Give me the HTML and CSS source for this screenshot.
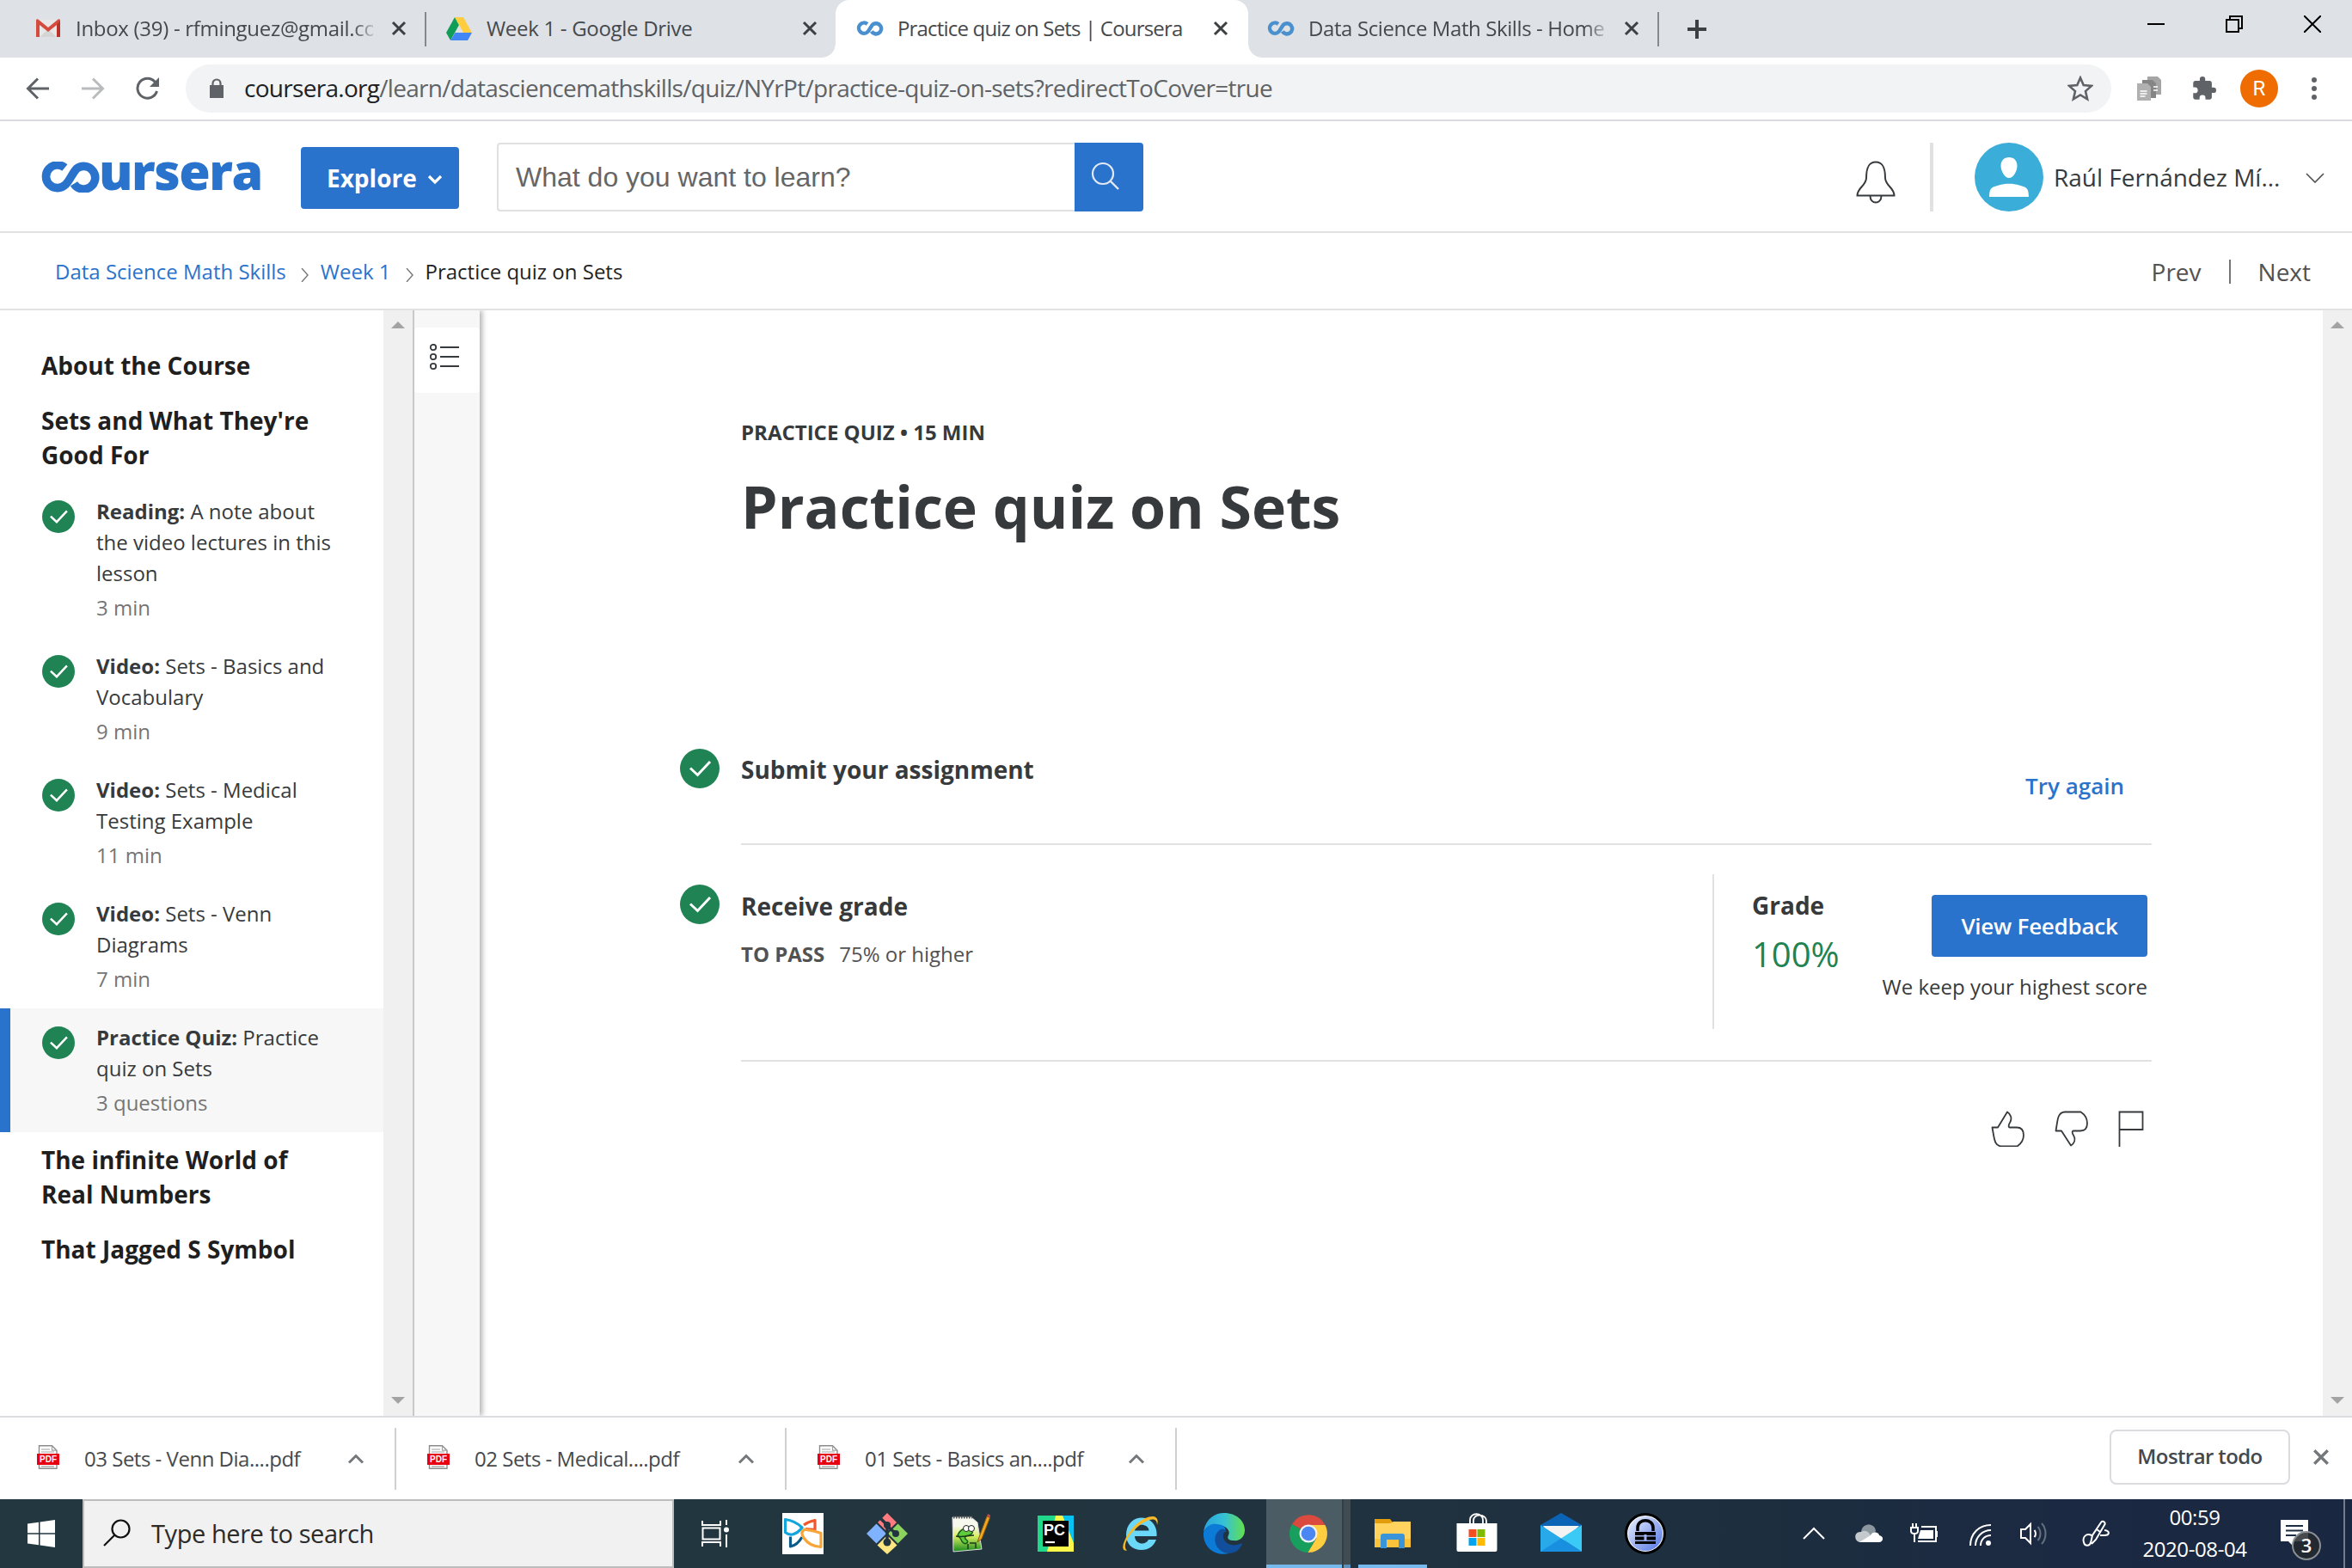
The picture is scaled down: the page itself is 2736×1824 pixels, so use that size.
FILE: index.html
```html
<!DOCTYPE html>
<html lang="en">
<head>
<meta charset="utf-8">
<title>Practice quiz on Sets | Coursera</title>
<link rel="stylesheet" href="styles.css">
</head>
<body>
<svg class="defs" width="0" height="0" aria-hidden="true">
  <defs>
    <symbol id="infinity" viewBox="24 114 210 108">
      <path d="M109 135A40 40 0 1 0 112 194C126 180 136 154 150 139A40 40 0 1 1 141 191" fill="none" stroke="currentColor" stroke-width="29"/>
    </symbol>
    <symbol id="close" viewBox="0 0 18 18"><path d="M2 2l14 14M16 2L2 16" stroke="currentColor" stroke-width="3" fill="none"/></symbol>
    <symbol id="check" viewBox="0 0 46 46"><circle cx="23" cy="23" r="23" fill="#1f8354"/><path d="M12 22.5l8.500 8L35 15" fill="none" stroke="#fff" stroke-width="3"/></symbol>
    <symbol id="pdf" viewBox="0 0 26 28">
      <path d="M2.500 .7h15l5.500 5.500v21.100h-20.500z" fill="#fff" stroke="#8c8c8c" stroke-width="1.400"/>
      <path d="M17.500 .7v5.500h5.500M5 5h10M5 8h15M5 24.800h15" fill="none" stroke="#a0a0a0" stroke-width="1.200"/>
      <rect y="10" width="26" height="13" fill="#e60012"/>
      <text x="13" y="20.300" class="pdf-label">PDF</text>
    </symbol>
    <symbol id="up" viewBox="0 0 20 12"><path d="M2 10.500l8-8 8 8" fill="none" stroke="#75787b" stroke-width="3"/></symbol>
  </defs>
</svg>

<header class="tabstrip">
  <div class="tabs">
    <div class="tab">
      <svg class="tab-icon" viewBox="0 0 32 32"><path d="M3 6h26v20H3z" fill="#e8e8e8"/><path d="M6 26l10-9 10 9z" fill="#d5d5d5"/><path d="M2 7v19h4V12l10 8 10-8v14h4V7c0-2-2-2-3-1L16 15 5 6C4 5 2 5 2 7z" fill="#d54b3d"/><path d="M26 12l4-5v19h-4z" fill="#b8332a"/></svg>
      <span class="tab-title fade">Inbox (39) - rfminguez@gmail.com</span>
      <svg class="tab-close"><use href="#close"/></svg>
    </div>
    <div class="tab">
      <svg class="tab-icon" viewBox="0 0 32 32"><path d="M11 3L1 21l5 9 10-18z" fill="#109d58"/><path d="M11 3h10l10 18H21z" fill="#ffcd40"/><path d="M11.500 21H31l-5 9H6z" fill="#4285f4"/></svg>
      <span class="tab-title">Week 1 - Google Drive</span>
      <svg class="tab-close"><use href="#close"/></svg>
    </div>
    <div class="tab active">
      <svg class="tab-icon mark"><use href="#infinity"/></svg>
      <span class="tab-title tight">Practice quiz on Sets | Coursera</span>
      <svg class="tab-close"><use href="#close"/></svg>
    </div>
    <div class="tab">
      <svg class="tab-icon mark"><use href="#infinity"/></svg>
      <span class="tab-title home-title fade">Data Science Math Skills - Home</span>
      <svg class="tab-close"><use href="#close"/></svg>
    </div>
    <svg class="new-tab" viewBox="0 0 24 24"><path d="M12 1v22M1 12h22" stroke="#3c4043" stroke-width="4"/></svg>
  </div>
  <div class="window-controls">
    <svg viewBox="0 0 20 20"><path d="M0 10h20" stroke="#000" stroke-width="2"/></svg>
    <svg viewBox="0 0 20 20"><path d="M1 5h14v14H1zM5 5V1h14v14h-4" fill="none" stroke="#000" stroke-width="2"/></svg>
    <svg viewBox="0 0 20 20"><path d="M0 0l20 20M20 0L0 20" stroke="#000" stroke-width="2"/></svg>
  </div>
</header>

<nav class="toolbar">
  <svg class="nav-btn" viewBox="0 0 28 28"><path d="M27 14H3M14 2.500L2.500 14 14 25.500" fill="none" stroke="#5f6368" stroke-width="3"/></svg>
  <svg class="nav-btn" viewBox="0 0 28 28"><path d="M1 14h24M14 2.500L25.500 14 14 25.500" fill="none" stroke="#b9bbbd" stroke-width="3"/></svg>
  <svg class="nav-btn" viewBox="0 0 28 28"><path d="M24.500 17A11.500 11.500 0 1 1 22.500 6.500" fill="none" stroke="#5f6368" stroke-width="3"/><path d="M27 1v11H16z" fill="#5f6368"/></svg>
  <div class="omnibox">
    <svg class="lock" viewBox="0 0 18 24"><path d="M1 8h16v15H1z" fill="#5f6368"/><path d="M4.500 9V6a4.500 4.500 0 0 1 9 0v3" fill="none" stroke="#5f6368" stroke-width="2.200"/></svg>
    <span class="url"><b>coursera.org</b>/learn/datasciencemathskills/quiz/NYrPt/practice-quiz-on-sets?redirectToCover=true</span>
    <svg class="star" viewBox="0 0 30 30"><path d="M15 2.500l3.700 8.600 9.300.8-7 6.200 2.100 9.200-8.100-4.900-8.100 4.900L9 18.100l-7-6.200 9.300-.8z" fill="none" stroke="#5f6368" stroke-width="2.600"/></svg>
  </div>
  <svg class="ext" viewBox="0 0 28 28"><path d="M12 0h12l4 4v17H12z" fill="#a5a5a5"/><path d="M6 4h12l4 4v17H6z" fill="#858585"/><path d="M0 8h12l4 4v16H0z" fill="#b0b0b0"/><path d="M3.500 17h8M3.500 20h8M3.500 23h6M19 12h5M19 16h5" stroke="#fff" stroke-width="1.400"/></svg>
  <svg class="ext" viewBox="1 1 22 22"><path d="M20.500 11H19V7c0-1.100-.9-2-2-2h-4V3.500a2.500 2.500 0 0 0-5 0V5H4c-1.100 0-2 .9-2 2v3.800h1.500a2.700 2.700 0 0 1 0 5.400H2V20c0 1.100.9 2 2 2h3.800v-1.500a2.700 2.700 0 0 1 5.400 0V22H17c1.100 0 2-.9 2-2v-4h1.500a2.500 2.500 0 0 0 0-5z" fill="#5f6368"/></svg>
  <span class="profile">R</span>
  <svg class="dots" viewBox="0 0 6 28"><g fill="#5f6368"><circle cx="3" cy="4" r="3"/><circle cx="3" cy="14" r="3"/><circle cx="3" cy="24" r="3"/></g></svg>
</nav>

<header class="site-header">
  <div class="logo"><svg class="logo-mark"><use href="#infinity"/></svg><span>ursera</span></div>
  <button class="explore">Explore <svg viewBox="0 0 18 12"><path d="M2 2l7 7 7-7" fill="none" stroke="#fff" stroke-width="3.200"/></svg></button>
  <div class="search">
    <span class="search-field">What do you want to learn?</span>
    <span class="search-btn"><svg viewBox="0 0 34 34"><circle cx="14" cy="14" r="12" fill="none" stroke="#e4eaf3" stroke-width="2.200"/><path d="M22.500 22.500L32 32" stroke="#e4eaf3" stroke-width="2.400"/></svg></span>
  </div>
  <svg class="bell" viewBox="0 0 46 50"><path d="M12 20C12 6 16 1.500 23 1.500S34 6 34 20c0 9 10.500 11 10.500 20.500h-43C1.500 31 12 29 12 20zM16.500 41c0 10 13 10 13 0" fill="none" stroke="#373a3c" stroke-width="2"/></svg>
  <div class="account">
    <svg class="avatar" viewBox="0 0 80 80"><circle cx="40" cy="40" r="40" fill="#3badd9"/><path d="M40 17c6 0 9.500 4 9.500 10S45 41 40 41s-9.500-8-9.500-14S34 17 40 17zM17 63c.5-10 1.500-11 11-13.500 7-2.500 17-2.500 24 0 9.500 2.500 10.500 3.500 11 13.500z" fill="#fff"/></svg>
    <span class="name">Raúl Fernández Mí...</span>
    <svg class="name-chevron" viewBox="0 0 22 12"><path d="M1 1l10 10L21 1" fill="none" stroke="#4c4f52" stroke-width="1.600"/></svg>
  </div>
</header>

<div class="crumbs">
  <a>Data Science Math Skills</a>
  <svg viewBox="0 0 9 16"><path d="M1 0l7 8-7 8" fill="none" stroke="#777" stroke-width="1.400"/></svg>
  <a>Week 1</a>
  <svg viewBox="0 0 9 16"><path d="M1 0l7 8-7 8" fill="none" stroke="#777" stroke-width="1.400"/></svg>
  <span class="current">Practice quiz on Sets</span>
  <span class="prev">Prev</span><span class="next">Next</span>
</div>

<div class="workspace">
  <aside class="sidebar">
    <h3>About the Course</h3>
    <h3>Sets and What They're<br>Good For</h3>
    <div class="item"><svg><use href="#check"/></svg><p><b>Reading:</b> A note about<br>the video lectures in this<br>lesson<small>3 min</small></p></div>
    <div class="item"><svg><use href="#check"/></svg><p><b>Video:</b> Sets - Basics and<br>Vocabulary<small>9 min</small></p></div>
    <div class="item"><svg><use href="#check"/></svg><p><b>Video:</b> Sets - Medical<br>Testing Example<small>11 min</small></p></div>
    <div class="item"><svg><use href="#check"/></svg><p><b>Video:</b> Sets - Venn<br>Diagrams<small>7 min</small></p></div>
    <div class="item selected"><svg><use href="#check"/></svg><p><b>Practice Quiz:</b> Practice<br>quiz on Sets<small>3 questions</small></p></div>
    <h3>The infinite World of<br>Real Numbers</h3>
    <h3>That Jagged S Symbol</h3>
  </aside>
  <div class="scrollbar"><i class="arrow-up"></i><i class="arrow-down"></i></div>
  <div class="rail">
    <div class="rail-btn"><svg viewBox="0 0 34 30"><g fill="none" stroke="#373a3c" stroke-width="1.800"><circle cx="4" cy="4" r="3.200"/><circle cx="4" cy="15" r="3.200"/><circle cx="4" cy="26" r="3.200"/><path d="M12 4h22M12 15h22M12 26h22"/></g></svg></div>
  </div>
  <main class="content">
    <p class="eyebrow">PRACTICE QUIZ • 15 MIN</p>
    <h1>Practice quiz on Sets</h1>
    <section class="step submit">
      <svg class="step-check"><use href="#check"/></svg>
      <div class="step-body">
        <h2>Submit your assignment</h2>
        <a class="retry">Try again</a>
      </div>
    </section>
    <section class="step grade">
      <svg class="step-check"><use href="#check"/></svg>
      <div class="step-body">
        <div class="receive">
          <h2>Receive grade</h2>
          <p><b>TO PASS</b><span>75% or higher</span></p>
        </div>
        <div class="result">
          <div class="score"><h2>Grade</h2><strong>100%</strong></div>
          <div class="feedback"><button>View Feedback</button><p>We keep your highest score</p></div>
        </div>
      </div>
    </section>
    <div class="reactions">
      <svg viewBox="0 0 40 42"><path d="M1.500 19.500H8L19 1.500C23 4 25 9 22 14c-1.500 2-2 5.500 0 5.500h8c6 0 8 4 8 9 0 6-3 10-7.500 13H12C5 41 4 34 3 28z" fill="none" stroke="#373a3c" stroke-width="1.800" stroke-linejoin="round"/></svg>
      <svg viewBox="0 0 40 42"><path d="M1.500 23.500H8l11 17c4-2.500 6-7 3-12-1.500-2-2-5 0-5h8c6 0 8-3 8-9 0-6-3-10-7.500-13H12C5 2 4 8 3 14z" fill="none" stroke="#373a3c" stroke-width="1.800" stroke-linejoin="round"/></svg>
      <svg class="flag" viewBox="0 0 30 42"><path d="M1.500 42V1.500h27v20.500h-27" fill="none" stroke="#373a3c" stroke-width="1.800"/></svg>
    </div>
  </main>
  <div class="scrollbar page"><i class="arrow-up"></i><i class="arrow-down"></i></div>
</div>

<div class="downloads">
  <div class="download"><svg class="file"><use href="#pdf"/></svg><span>03 Sets - Venn Dia....pdf</span><svg class="caret"><use href="#up"/></svg></div>
  <div class="download"><svg class="file"><use href="#pdf"/></svg><span>02 Sets - Medical....pdf</span><svg class="caret"><use href="#up"/></svg></div>
  <div class="download"><svg class="file"><use href="#pdf"/></svg><span>01 Sets - Basics an....pdf</span><svg class="caret"><use href="#up"/></svg></div>
  <button class="show-all">Mostrar todo</button>
  <svg class="dismiss"><use href="#close"/></svg>
</div>

<footer class="taskbar">
  <div class="start"><svg viewBox="0 0 32 32"><path d="M0 4.500l13-1.800v12.600H0zM14.500 2.500L32 0v15.300H14.500zM0 16.700h13v12.600L0 27.500zM14.500 16.700H32V32l-17.500-2.500z" fill="#fff"/></svg></div>
  <div class="task-search"><svg viewBox="0 0 32 32"><circle cx="20.500" cy="11.500" r="10" fill="none" stroke="#111" stroke-width="2.200"/><path d="M13.500 18.500L1 31" stroke="#111" stroke-width="2.200"/></svg><span>Type here to search</span></div>
  <div class="app task-view"><svg viewBox="0 0 32 32"><path d="M1 1v5h21V1M1 31v-5h21v5M1.500 9.500h20v13h-20zM29 0v6M29 17v15" fill="none" stroke="#fff" stroke-width="2"/><circle cx="29" cy="11.500" r="3" fill="#fff"/></svg></div>
  <div class="app"><svg viewBox="0 0 48 48"><path d="M0 0h48v48H0z" fill="#fff"/><g fill="none" stroke-width="3.200" stroke-linejoin="round"><path d="M9.500 27.500V39c6-1 10-5 13.500-11" stroke="#0b5a8a"/><path d="M25 14c4-3 8-4.500 13-5.500v11l-11-1" stroke="#f0592b"/><path d="M26 19c-4 3-4 5-1 10 4 6 11 10 20 10.500v-16C38 21 32 20 25 19" stroke="#f8a63a"/><path d="M23 17C18 12 12 8.500 3.500 7.500v15C9 27 16 26 23 17z" stroke="#12a5dc"/></g></svg></div>
  <div class="app"><svg viewBox="0 0 48 48"><path d="M24 0l11 11-11 11-11-11z" fill="#ff7b7f"/><path d="M11.500 12.500L23 24 11.500 35.500 0 24z" fill="#80b3ff"/><path d="M36.500 12.500L48 24 36.500 35.500 25 24z" fill="#8dd35f"/><path d="M24 26l11.500 11.500L24 48 12.500 37.500z" fill="#ffe680"/><path d="M16 6l8 8v20M24 15l10 9" fill="none" stroke="#22353f" stroke-width="3.500"/><circle cx="24" cy="14" r="4" fill="#22353f"/><circle cx="34" cy="24" r="4" fill="#22353f"/><circle cx="24" cy="34" r="4.500" fill="#22353f"/></svg></div>
  <div class="app"><svg viewBox="0 0 48 48"><defs><linearGradient id="np" x2="0" y2="1"><stop offset=".25" stop-color="#f7f9ee"/><stop offset=".55" stop-color="#d8ef62"/><stop offset="1" stop-color="#158a1c"/></linearGradient></defs><path d="M2 5h22l7 6 5 31-33 3z" fill="url(#np)" stroke="#ddd"/><path d="M3 5h22" stroke="#555" stroke-width="3" stroke-dasharray="1.500 1.500"/><path d="M8 26c3-8 10-9 15-7 4 3 2 6-2 7-4 0-6 3-3 5 3 2 1 6-3 4-4-2-2-6-7-9z" fill="#5ecb3a" stroke="#185c1b" stroke-width="1.500"/><path d="M6 27c8 2 14-1 21-1M20 36v6M22 35h7v6" fill="none" stroke="#1c3a18" stroke-width="1.500"/><g fill="#fff" stroke="#222"><circle cx="18" cy="18" r="3.500"/><circle cx="24" cy="18" r="3.500"/></g><path d="M31 34l2-6 9-24 3.500 1.500L36 30z" fill="#f2a91c" stroke="#8d5a12"/><path d="M42 4l1-3 3 1.500-.5 3z" fill="#c54b4b"/></svg></div>
  <div class="app"><svg viewBox="0 0 48 48"><path d="M3 3h42v42H3z" fill="#21d789"/><path d="M28 3h17v30L33 20z" fill="#07c3f2"/><path d="M24 3h8l13 32v10H14z" fill="#fcf84a"/><path d="M34 3h11v25z" fill="#07c3f2"/><path d="M9 9h30v30H9z" fill="#000"/><text x="10" y="25.500" class="pc-label">PC</text><path d="M12 34h11" stroke="#fff" stroke-width="2.200"/></svg></div>
  <div class="app"><svg viewBox="0 0 48 48"><path d="M43.500 27H18c.5 10 13 11 16 4h9c-3 8-9 12-17 12C15 43 8 36 8 25S16 5.500 26 5.500 44.500 14 43.500 27zM18 20.500h16.500C34 12 19 11 18 20.500z" fill="#6cd8f9"/><path d="M9 43.500C-2 46 8 23 21 12 34 1 48 1 44 14c0-11-12-6-20 0C10 25 3 39 9 43.500z" fill="#f6b929"/></svg></div>
  <div class="app"><svg viewBox="0 0 48 48"><defs><linearGradient id="eg"><stop stop-color="#2aa5dc"/><stop offset=".5" stop-color="#35c1d6"/><stop offset="1" stop-color="#63e04c"/></linearGradient></defs><path d="M0 22C2 8 12 0 24 0c14 0 24 9 24 20 0 8-6 13-13 12-6 0-8-3-6-6 3-6-4-12-12-12C9 13 2 17 0 22z" fill="url(#eg)"/><path d="M0 23c2-7 9-11 15-10 7 0 12 4 10 8-5 2-8 8-5 15 2 7 7 10 10 11C14 51-1 40 0 23z" fill="#0c7bd7"/><path d="M20 19c-8 5-9 16-2 23 8 8 21 6 26-4 2-2 0-3-2-2-9 4-18-1-19-8 0-4 0-6 4-6-1-3-4-4-7-3z" fill="#114f9c"/></svg></div>
  <div class="app running current-app"><svg viewBox="0 0 48 48"><path d="M24 24L5 13A22 22 0 0 1 43.500 14H24z" fill="#db4a3e"/><path d="M24 24L5 13a22 22 0 0 0 18.500 33L33 29z" fill="#17a05d"/><path d="M24 24l9.500 5L23.500 46A22 22 0 0 0 43.500 14H24z" fill="#ffcd40"/><circle cx="24" cy="24" r="10.500" fill="#f1f1f1"/><circle cx="24" cy="24" r="8.300" fill="#4a87f2"/></svg></div>
  <div class="app running explorer"><svg viewBox="0 0 48 48"><path d="M3 7h18l4 5-3 6H3z" fill="#e39c0c"/><path d="M3 12h18l4-2h20v30H3z" fill="#ffd35e"/><path d="M3 30h42v10H3z" fill="#fbc23c"/><path d="M10 41V27c0-2 1-3 3-3h22c2 0 3 1 3 3v14h-7V31H17v10z" fill="#3a94da"/></svg></div>
  <div class="app"><svg viewBox="0 0 48 48"><path d="M16 13V8c0-9 15-9 15 0v5M20 13V9c0-9 15-8 15 0v4" fill="none" stroke="#fff" stroke-width="1.800"/><path d="M.5 12h47v31a2 2 0 0 1-2 2h-43a2 2 0 0 1-2-2z" fill="#fff"/><path d="M14.500 19h9v9h-9z" fill="#f25022"/><path d="M24.500 19h9v9h-9z" fill="#7fba00"/><path d="M14.500 29h9v9h-9z" fill="#00a4ef"/><path d="M24.500 29h9v9h-9z" fill="#ffb900"/></svg></div>
  <div class="app"><svg viewBox="0 0 48 48"><path d="M0 14L24 0l24 14v6H0z" fill="#0a63b5"/><path d="M3 15h42L28 32H16z" fill="#f3f3f3"/><path d="M0 14l48 31H0z" fill="#27a9ea"/><path d="M48 14L24 29.500 48 45z" fill="#3bcaf6"/><path d="M0 45h48L24 29.500z" fill="#1890df"/></svg></div>
  <div class="app"><svg viewBox="0 0 48 48"><defs><linearGradient id="kp" y2="1"><stop stop-color="#eef2fe"/><stop offset="1" stop-color="#4f74e3"/></linearGradient></defs><circle cx="24" cy="24" r="22.500" fill="#fff" stroke="#000" stroke-width="3"/><circle cx="24" cy="24" r="20" fill="url(#kp)"/><path d="M15 21v-4c0-11 18-11 18 0v4" fill="none" stroke="#000" stroke-width="3.500"/><path d="M12 22h24v4H12zM12 27.500h24v4H12zM12 33h24v3H12z" fill="#000"/><path d="M24 25v7" stroke="#9fb4f3" stroke-width="3"/></svg></div>
  <div class="tray">
    <svg viewBox="0 0 32 32"><path d="M4 22l12-12 12 12" fill="none" stroke="#fff" stroke-width="2"/></svg>
    <svg viewBox="0 0 32 32"><path d="M7 14C8 3 23 3 24 13l-6 8z" fill="#8b969f"/><path d="M7 26c-9 0-9-13 0-12 5-3 9 0 11 4l6 8z" fill="#c3c9cd"/><path d="M5 26l13-8c3-6 10-3 10 0 6 1 5 8 0 8z" fill="#fff"/></svg>
    <svg viewBox="0 0 32 32"><path d="M3 4v6M7 4v6M1 9h8v4c0 4-8 4-8 0zM5 16v10M13 8h17v17H9M31 13v7" fill="none" stroke="#fff" stroke-width="2"/><path d="M12 12h15v10H9z" fill="#fff"/></svg>
    <svg class="wifi" viewBox="0 0 32 32"><g fill="none" stroke="#fff" stroke-width="2"><path d="M3 30C3 16 13 6 27 6M9 30c0-10 8-18 18-18M15 30c0-7 5-12 12-12"/></g><circle cx="24" cy="27" r="3" fill="#fff"/></svg>
    <svg viewBox="0 0 32 32"><path d="M1 11h5l6-6v22l-6-6H1z" fill="none" stroke="#fff" stroke-width="2"/><path d="M16.500 12c2 2 2 6 0 8" fill="none" stroke="#fff" stroke-width="2"/><path d="M20.500 8c4 4 4 12 0 16M25 4c6 6 6 18 0 24" fill="none" stroke="#66717f" stroke-width="2"/></svg>
    <svg class="pen" viewBox="0 0 32 32"><path d="M11 18c-6-3-11 2-9 8 1 5 7 5 8 0M10 27l2-9L22 3c2-3 6 0 4 3L16 23l-5 5M17 11l4 3M26 12c7 1 6 6 0 6h-5" fill="none" stroke="#fff" stroke-width="2"/></svg>
  </div>
  <div class="clock"><span>00:59</span><span>2020-08-04</span></div>
  <div class="notices">
    <svg viewBox="0 0 32 30"><path d="M0 0h32v25H14v5l-5-5H0z" fill="#fff"/><path d="M6 7h20M6 12.500h20M6 18h12" stroke="#1c2c42" stroke-width="2"/></svg>
    <span class="badge">3</span>
  </div>
  <div class="show-desktop"></div>
</footer>
</body>
</html>
```
FILE: styles.css
```css
* { box-sizing: border-box; }
body {
  margin: 0;
  width: 2736px;
  height: 1824px;
  overflow: hidden;
  display: flex;
  flex-direction: column;
  background: #fff;
  color: #373a3c;
  font: 400 24px/32px "Open Sans", "Noto Sans", sans-serif;
}
.defs { position: absolute; }
svg { display: block; flex: none; }
h1, h2, h3, p { margin: 0; }
button { border: 0; padding: 0; font: inherit; }

/* Browser tabs */
.tabstrip {
  height: 67px;
  flex: none;
  display: flex;
  justify-content: space-between;
  padding-left: 16px;
  background: #dee1e6;
}
.tabs { display: flex; align-items: center; }
.tab {
  position: relative;
  width: 478px;
  height: 67px;
  padding: 0 21px 2px 24px;
  display: flex;
  align-items: center;
  color: #45494d;
}
.tab:nth-child(1)::after, .tab:nth-child(4)::after {
  content: "";
  position: absolute;
  right: -2px;
  top: 14px;
  width: 2px;
  height: 40px;
  background: #85888c;
}
.tab.active { width: 480px; padding-right: 23px; margin-right: -2px; background: #fff; border-radius: 16px 16px 0 0; }
.tab.active::before, .tab.active::after {
  content: "";
  position: absolute;
  bottom: 0;
  width: 16px;
  height: 16px;
}
.tab.active::before { left: -16px; background: radial-gradient(circle at 0 0, #dee1e6 15.500px, #fff 16px); }
.tab.active::after { right: -16px; background: radial-gradient(circle at 100% 0, #dee1e6 15.500px, #fff 16px); }
.tab-icon { width: 32px; height: 32px; margin-right: 16px; }
.mark { color: #4a90cf; }
.tab-title { width: 346px; overflow: hidden; white-space: nowrap; letter-spacing: -0.3px; }
.tight { letter-spacing: -0.820px; }
.home-title { letter-spacing: -0.400px; }
.fade { -webkit-mask-image: linear-gradient(90deg, #000 93%, transparent 102%); mask-image: linear-gradient(90deg, #000 93%, transparent 102%); }
.tab-close { width: 18px; height: 18px; margin-left: auto; color: #3c4043; }
.new-tab { width: 24px; height: 24px; margin-left: 34px; }
.window-controls { display: flex; gap: 71px; padding: 18px 36px 0 0; }
.window-controls svg { width: 20px; height: 20px; }

/* Browser toolbar */
.toolbar {
  height: 74px;
  flex: none;
  display: flex;
  align-items: center;
  padding: 0 41px 0 30px;
  border-bottom: 2px solid #dadce0;
}
.nav-btn { width: 28px; height: 28px; margin-right: 36px; }
.nav-btn:nth-child(3) { margin-right: 30px; }
.omnibox {
  width: 2240px;
  height: 56px;
  display: flex;
  align-items: center;
  padding: 0 21px 0 27px;
  border-radius: 28px;
  background: #f1f3f4;
}
.lock { width: 18px; height: 24px; margin-right: 23px; }
.url { font-size: 28px; line-height: 40px; letter-spacing: -0.710px; color: #5f6368; padding-bottom: 2px; }
.url b { font-weight: 400; color: #202124; }
.star { width: 30px; height: 30px; margin-left: auto; }
.ext { width: 28px; height: 28px; margin-left: 30px; }
.ext + .ext { margin-left: 36px; }
.profile {
  width: 44px;
  height: 44px;
  margin: 0 auto 0 28px;
  border-radius: 50%;
  background: #ef6c00;
  color: #fff;
  font: 400 24px/44px Roboto, sans-serif;
  text-align: center;
}
.dots { width: 6px; height: 28px; }

/* Site header */
.site-header {
  height: 130px;
  flex: none;
  display: flex;
  align-items: center;
  padding: 1px 32px 0 47px;
  border-bottom: 2px solid #e1e1e1;
}
.logo {
  width: 303px;
  display: flex;
  align-items: center;
  color: #2a73cc;
  font-size: 59px;
  line-height: 36px;
  font-weight: 800;
  letter-spacing: -1.500px;
}
.logo span { margin: -16px 0 0 -2px; }
.logo-mark { width: 70px; height: 36px; }
.explore {
  width: 184px;
  height: 72px;
  display: flex;
  align-items: center;
  gap: 12px;
  padding-left: 30px;
  border-radius: 4px;
  background: #2a73cc;
  color: #fff;
  font-size: 28px;
  font-weight: 700;
  margin-top: 2px;
}
.explore svg { width: 18px; height: 12px; margin-top: 4px; }
.search { display: flex; width: 752px; height: 80px; margin-left: 44px; }
.search-field {
  flex: 1;
  padding-left: 20px;
  border: 2px solid #e1e1e1;
  border-right: 0;
  border-radius: 4px 0 0 4px;
  color: #666;
  font: 32px/76px "Liberation Sans", sans-serif;
}
.search-btn {
  width: 80px;
  display: flex;
  align-items: center;
  padding-left: 19px;
  border-radius: 0 4px 4px 0;
  background: #2a73cc;
}
.search-btn svg { width: 34px; height: 34px; margin-bottom: 1px; }
.bell { width: 46px; height: 50px; margin: 12px 40px 0 auto; }
.account {
  height: 80px;
  display: flex;
  align-items: center;
  border-left: 4px solid #e1e1e1;
  padding-left: 48px;
}
.avatar { width: 80px; height: 80px; }
.name { width: 305px; padding-left: 12px; font-size: 28px; white-space: nowrap; }
.name-chevron { width: 22px; height: 12px; margin-top: 2px; }

/* Breadcrumbs */
.crumbs {
  height: 90px;
  flex: none;
  display: flex;
  align-items: center;
  padding: 1px 48px 0 64px;
  border-bottom: 2px solid #e1e1e1;
}
.crumbs a { color: #2a73cc; }
.crumbs svg { width: 9px; height: 16px; margin: 8px 14px 0 17px; }
.crumbs .current { color: #1f1f1f; }
.prev, .next { font-size: 28px; color: #525252; }
.prev { margin-left: auto; }
.next { margin-left: 32px; padding-left: 32px; border-left: 2px solid #757575; line-height: 28px; }

/* Workspace */
.workspace { height: 1286px; flex: none; display: flex; }
.sidebar { width: 446px; padding-top: 32px; }
.sidebar h3 { padding: 12px 0 12px 48px; font-size: 28px; line-height: 40px; color: #1f1f1f; }
.item { display: flex; padding: 16px 0 16px 49px; }
.item svg { width: 38px; height: 38px; margin: 5px 25px 0 0; }
.item p { line-height: 36px; white-space: nowrap; }
.item small { display: block; margin-top: 4px; font-size: 24px; color: #757575; }
.item.selected { padding-left: 37px; border-left: 12px solid #2a73cc; background: #f7f7f7; }
.scrollbar {
  width: 34px;
  display: flex;
  flex-direction: column;
  justify-content: space-between;
  align-items: center;
  padding: 13px 0 14px;
  background: #f0f0f0;
}
.scrollbar i { border: 8px solid transparent; }
.scrollbar .arrow-up { border-top: 0; border-bottom-color: #a3a3a3; }
.scrollbar .arrow-down { border-bottom: 0; border-top-color: #a3a3a3; }
.rail {
  width: 78px;
  padding-top: 20px;
  border-left: 2px solid #c8c8c8;
  background: #f7f7f7;
  box-shadow: 3px 0 6px rgba(0, 0, 0, 0.300);
  clip-path: inset(0 -14px 0 0);
}
.rail-btn { height: 76px; padding: 19px 0 0 18px; border-radius: 4px; background: #fff; }
.rail-btn svg { width: 34px; height: 30px; }
.content { flex: 1; padding: 126px 199px 0 233px; }
.eyebrow, .content h1 { margin-left: 71px; }
.eyebrow { font-weight: 700; }
h1 { margin-top: 24px; font-size: 68px; line-height: 92px; }
h2 { font-size: 28px; line-height: 40px; }
.step { display: flex; }
.step-check { width: 46px; height: 46px; margin-right: 25px; }
.step-body { flex: 1; display: flex; justify-content: space-between; border-bottom: 2px solid #e1e1e1; }
.submit { height: 112px; margin-top: 236px; }
.submit h2 { padding-top: 4px; }
.retry { padding: 23px 32px 0 0; font-size: 26px; line-height: 40px; font-weight: 600; color: #2a73cc; }
.grade { height: 252px; }
.grade .step-check { margin-top: 46px; }
.receive { padding-top: 51px; }
.receive p { display: flex; gap: 17px; margin-top: 20px; color: #525252; }
.result {
  width: 511px;
  height: 180px;
  margin-top: 34px;
  padding: 0 5px 0 44px;
  display: flex;
  justify-content: space-between;
  border-left: 2px solid #e1e1e1;
}
.score { padding-top: 16px; }
.score strong { display: block; margin-top: 9px; font-size: 40px; line-height: 56px; font-weight: 400; color: #1f8354; }
.feedback { display: flex; flex-direction: column; align-items: flex-end; padding-top: 24px; }
.feedback button {
  width: 251px;
  height: 72px;
  padding-bottom: 1px;
  border-radius: 4px;
  background: #2a73cc;
  color: #fff;
  font-size: 26px;
  font-weight: 600;
  letter-spacing: -0.250px;
}
.feedback p { margin-top: 19px; }
.reactions { display: flex; justify-content: flex-end; margin-top: 57px; padding-right: 9px; gap: 34px; }
.reactions svg { width: 40px; height: 42px; }
.reactions .flag { width: 30px; }

/* Downloads shelf */
.downloads {
  height: 97px;
  flex: none;
  display: flex;
  align-items: center;
  padding-right: 26px;
  border-top: 2px solid #dadce0;
}
.download {
  width: 454px;
  height: 72px;
  display: flex;
  align-items: center;
  padding: 0 35px 0 36px;
  border-right: 2px solid #d0d0d0;
}
.download:first-child { width: 461px; padding-left: 43px; }
.download span { margin-left: 29px; letter-spacing: -0.490px; color: #45494d; }
.file { width: 26px; height: 28px; margin-bottom: 4px; }
.caret { width: 20px; height: 12px; margin-left: auto; }
.pdf-label { font: 700 10px "Liberation Sans", sans-serif; fill: #fff; text-anchor: middle; }
.show-all {
  width: 210px;
  height: 64px;
  margin: 0 26px 4px auto;
  padding-bottom: 2px;
  border: 2px solid #dadce0;
  border-radius: 8px;
  background: #fff;
  color: #45494d;
  font-weight: 600;
  letter-spacing: -0.600px;
}
.dismiss { width: 20px; height: 20px; margin-bottom: 4px; color: #75787b; }

/* Taskbar */
.taskbar {
  height: 80px;
  flex: none;
  display: flex;
  background: linear-gradient(90deg, #22373f 0%, #22353f 45%, #1d2e3f 75%, #1b2942 88%, #1a2740 100%);
  color: #fff;
}
.start { width: 96px; display: flex; align-items: center; padding-left: 32px; }
.start svg { width: 32px; height: 32px; }
.task-search {
  width: 688px;
  display: flex;
  align-items: center;
  gap: 24px;
  padding-left: 22px;
  border: 2px solid #bcbcbc;
  background: #f1f1f1;
  color: #2b2b2b;
  font-size: 29px;
  letter-spacing: -0.420px;
}
.task-search svg { width: 32px; height: 32px; margin-bottom: 2px; }
.app { width: 98px; display: flex; align-items: center; justify-content: center; }
.app svg { width: 48px; height: 48px; }
.task-view { width: 96px; margin-right: 5px; }
.task-view svg { width: 32px; height: 32px; }
.pc-label { font: 700 18px "Liberation Sans", sans-serif; fill: #fff; }
.current-app {
  background:
    linear-gradient(#76b9ed, #76b9ed) 0 100% / 88px 4px no-repeat,
    linear-gradient(#5a92bd, #5a92bd) 90px 100% / 8px 4px no-repeat,
    linear-gradient(90deg, #4c5c64 88px, #333f45 88px, #333f45 90px, #3f4d53 90px);
}
.explorer { background: linear-gradient(#76b9ed, #76b9ed) 50% 100% / 80px 4px no-repeat; }
.tray { margin-left: auto; display: flex; align-items: center; gap: 32px; padding-right: 24px; }
.tray svg { width: 32px; height: 32px; }
.tray .wifi { margin: 0 -3px 0 3px; }
.tray .pen { margin-left: 8px; }
.clock {
  width: 150px;
  display: flex;
  flex-direction: column;
  align-items: center;
  padding-top: 2px;
  line-height: 37px;
  letter-spacing: -0.400px;
}
.notices { position: relative; width: 98px; padding: 24px 0 0 25px; }
.notices svg { width: 32px; height: 30px; }
.badge {
  position: absolute;
  left: 38px;
  top: 37px;
  width: 34px;
  height: 34px;
  border: 2px solid #8b8f94;
  border-radius: 50%;
  background: rgba(38, 42, 46, 0.850);
  font-size: 22px;
  line-height: 29px;
  font-weight: 600;
  text-align: center;
}
.show-desktop { width: 10px; border-left: 2px solid #747d8b; }
```
